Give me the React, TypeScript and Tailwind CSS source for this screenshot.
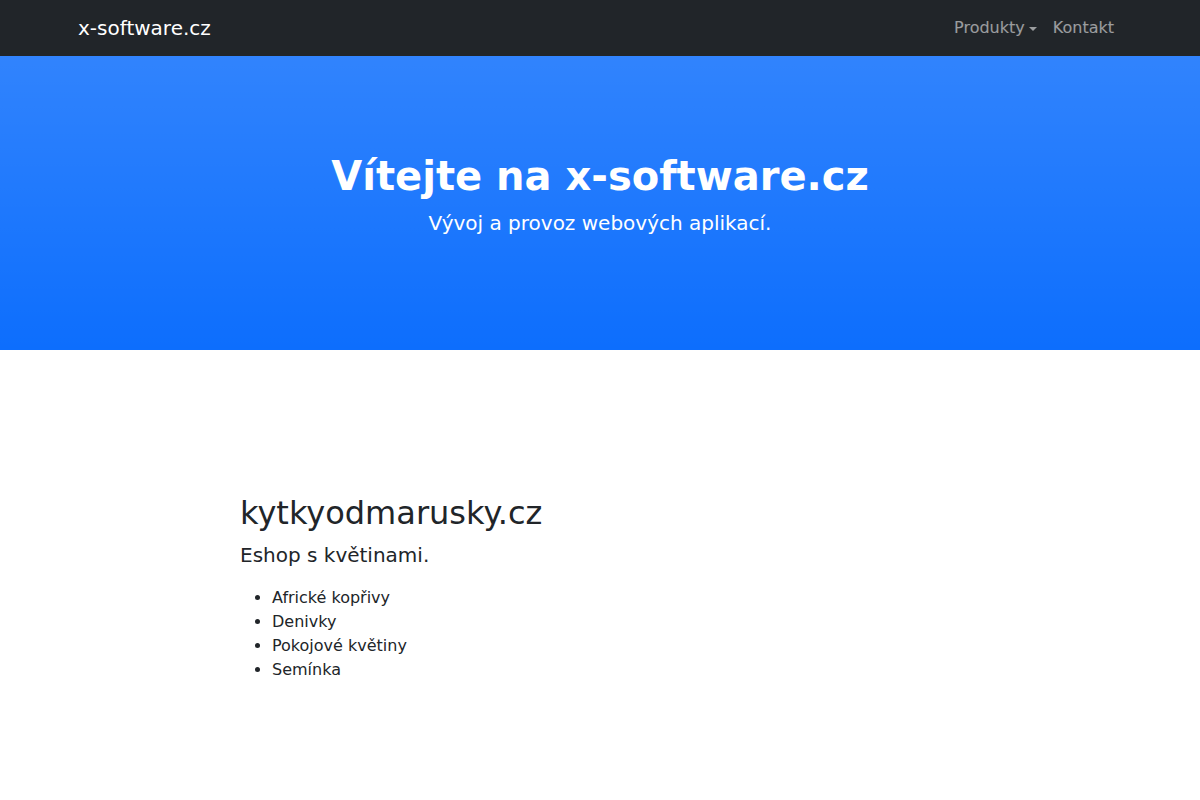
const products = ['Africké kopřivy', 'Denivky', 'Pokojové květiny', 'Semínka'];

function Navbar() {
  return (
    <nav className="bg-[#212529] py-2">
      <div className="mx-[30px] px-12 flex items-center justify-between">
        <a href="#" className="text-white text-[20px] leading-[30px] py-[5px]">
          x-software.cz
        </a>
        <ul className="flex items-center">
          <li>
            <a href="#" className="flex items-center px-2 py-2 text-[16px] leading-6 text-white/55">
              Produkty
              <span className="ml-[4px] mt-[2px] w-0 h-0 border-t-[4.8px] border-t-current border-x-[4.8px] border-x-transparent" />
            </a>
          </li>
          <li>
            <a href="#" className="block px-2 py-2 text-[16px] leading-6 text-white/55">
              Kontakt
            </a>
          </li>
        </ul>
      </div>
    </nav>
  );
}

export default function App() {
  return (
    <div className="min-h-[800px] bg-white text-[#212529] font-['DejaVu_Sans',sans-serif]">
      <Navbar />

      {/* Hero */}
      <header className="bg-[#0d6efd] bg-[linear-gradient(180deg,rgba(255,255,255,0.15),rgba(255,255,255,0))] py-12">
        <div className="py-12 text-center text-white">
          <h1 className="text-[40px] leading-[48px] font-bold mb-2">Vítejte na x-software.cz</h1>
          <p className="text-[20px] leading-[30px] font-normal mb-4">Vývoj a provoz webových aplikací.</p>
        </div>
      </header>

      {/* Produkt */}
      <section className="pt-[144px] pb-12">
        <div className="ml-[240px] w-[720px]">
          <h2 className="text-[32px] leading-[38px] font-normal mb-2">kytkyodmarusky.cz</h2>
          <p className="text-[20px] leading-[30px] font-normal mb-4">Eshop s květinami.</p>
          <ul className="list-disc pl-8 text-[16px] leading-6">
            {products.map((p) => (
              <li key={p}>{p}</li>
            ))}
          </ul>
        </div>
      </section>
    </div>
  );
}
